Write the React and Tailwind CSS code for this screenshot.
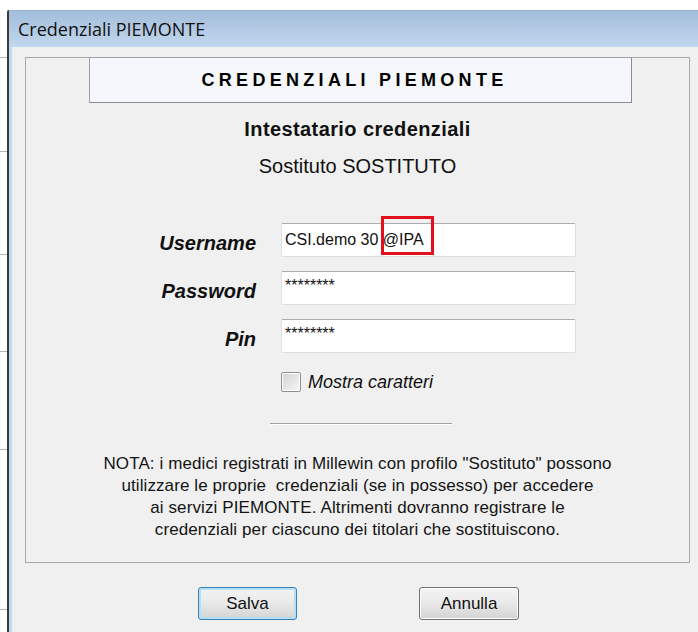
import React from 'react';

const sans = { fontFamily: '"Liberation Sans", Arial, sans-serif' };

function Field({ label, children }) {
    return (
        <div className="flex h-[34px] items-center">
            <span className="w-[230px] pt-[6px] text-right text-[20px] font-bold italic text-[#111]">{label}</span>
            <div className="relative ml-[25px] flex h-[34px] w-[295px] items-center rounded-[2px] border border-[#dbdfe6] border-t-[#abadb3] bg-white pl-[3px] text-[16px] text-[#111]">
                {children}
            </div>
        </div>
    );
}

function Tick({ gap }) {
    return <div className="h-px w-[7px] bg-[#b4b4b4]" style={{ marginTop: gap }} />;
}

export default function App() {
    return (
        <div className="h-[632px] w-[698px] overflow-hidden bg-white" style={sans}>
            <div className="h-[10px]" />
            <div className="flex h-[622px]">
                {/* strip of the window behind */}
                <div className="flex w-[7px] flex-col">
                    <Tick gap={47} />
                    <Tick gap={93} />
                    <Tick gap={102} />
                    <Tick gap={96} />
                    <Tick gap={97} />
                    <Tick gap={159} />
                </div>
                <div className="w-[2px] rounded-tl-[2px] bg-[#3a3a3a]" />

                <div className="flex flex-1 flex-col">
                    {/* title bar */}
                    <div
                        className="flex h-[37px] items-center border-t border-[#97b2d2] bg-gradient-to-b from-[#a3bddb] to-[#c1d7ed] pl-[9px] text-[18px] text-[#111]"
                        style={{ fontFamily: '"Open Sans", "Noto Sans", sans-serif' }}
                    >
                        Credenziali PIEMONTE
                    </div>

                    <div className="flex flex-1">
                        <div className="w-[3px] bg-[#c3d8ee]" />
                        <div className="flex flex-1 flex-col bg-[#f0f0f0] pl-[13px] pr-[8px] pt-[10px]">
                            {/* group box */}
                            <div className="flex h-[506px] flex-col border border-[#a9a9a9]">
                                <div className="-mt-px ml-[63px] flex h-[46px] w-[543px] items-center justify-center border border-[#a0a0a0] border-b-[#8c8c8c] border-r-[#8c8c8c] bg-[#f5f7fc] pr-[12px] text-[18px] font-bold tracking-[4.3px] text-black">
                                    CREDENZIALI PIEMONTE
                                </div>

                                <div className="mt-[14px] text-center text-[20px] font-bold leading-[24px] tracking-[0.4px] text-[#111]">
                                    Intestatario credenziali
                                </div>
                                <div className="mt-[13px] text-center text-[20px] leading-[24px] text-[#111]">
                                    Sostituto SOSTITUTO
                                </div>

                                <div className="mt-[45px] flex flex-col gap-[14px]">
                                    <Field label="Username">
                                        <span>CSI.demo 30 @IPA</span>
                                        <span className="absolute left-[99px] top-[-8px] h-[39px] w-[53px] border-[3px] border-[#e3101b]" />
                                    </Field>
                                    <Field label="Password">
                                        <span className="-mt-[4px]">********</span>
                                    </Field>
                                    <Field label="Pin">
                                        <span className="-mt-[4px]">********</span>
                                    </Field>
                                </div>

                                <div className="ml-[255px] mt-[19px] flex h-[20px] items-center">
                                    <div className="flex h-[20px] w-[20px] items-center justify-center rounded-[2px] border border-[#8f8f8f] bg-white">
                                        <div className="h-[16px] w-[16px] bg-gradient-to-br from-[#d4d4d4] to-[#f6f6f6]" />
                                    </div>
                                    <span className="ml-[7px] text-[18px] italic leading-[20px] text-[#111]">Mostra caratteri</span>
                                </div>

                                <div className="ml-[244px] mt-[31px] w-[182px] border-t border-b border-t-[#a0a0a0] border-b-white" />

                                <p className="mt-[28px] text-center text-[17px] leading-[22px] tracking-[0.1px] text-[#141414]">
                                    NOTA: i medici registrati in Millewin con profilo "Sostituto" possono
                                    <br />
                                    {'utilizzare le proprie\u00a0 credenziali (se in possesso) per accedere'}
                                    <br />
                                    ai servizi PIEMONTE. Altrimenti dovranno registrare le
                                    <br />
                                    credenziali per ciascuno dei titolari che sostituiscono.
                                </p>
                            </div>

                            {/* buttons */}
                            <div className="mt-[24px] flex justify-center gap-[122px] pl-[2px]">
                                <button className="flex h-[33px] w-[99px] items-center justify-center rounded-[3px] border border-[#3c7fb1] bg-gradient-to-b from-[#f4f4f4] via-[#e9e9e9] to-[#d3d3d3] text-[17px] text-[#111] shadow-[inset_0_0_0_2px_#b4e0f7]">
                                    Salva
                                </button>
                                <button className="flex h-[33px] w-[100px] items-center justify-center rounded-[3px] border border-[#707070] bg-gradient-to-b from-[#f4f4f4] via-[#e9e9e9] to-[#d3d3d3] text-[17px] text-[#111] shadow-[inset_0_0_0_1px_#fcfcfc]">
                                    Annulla
                                </button>
                            </div>
                        </div>
                    </div>
                </div>
            </div>
        </div>
    );
}
